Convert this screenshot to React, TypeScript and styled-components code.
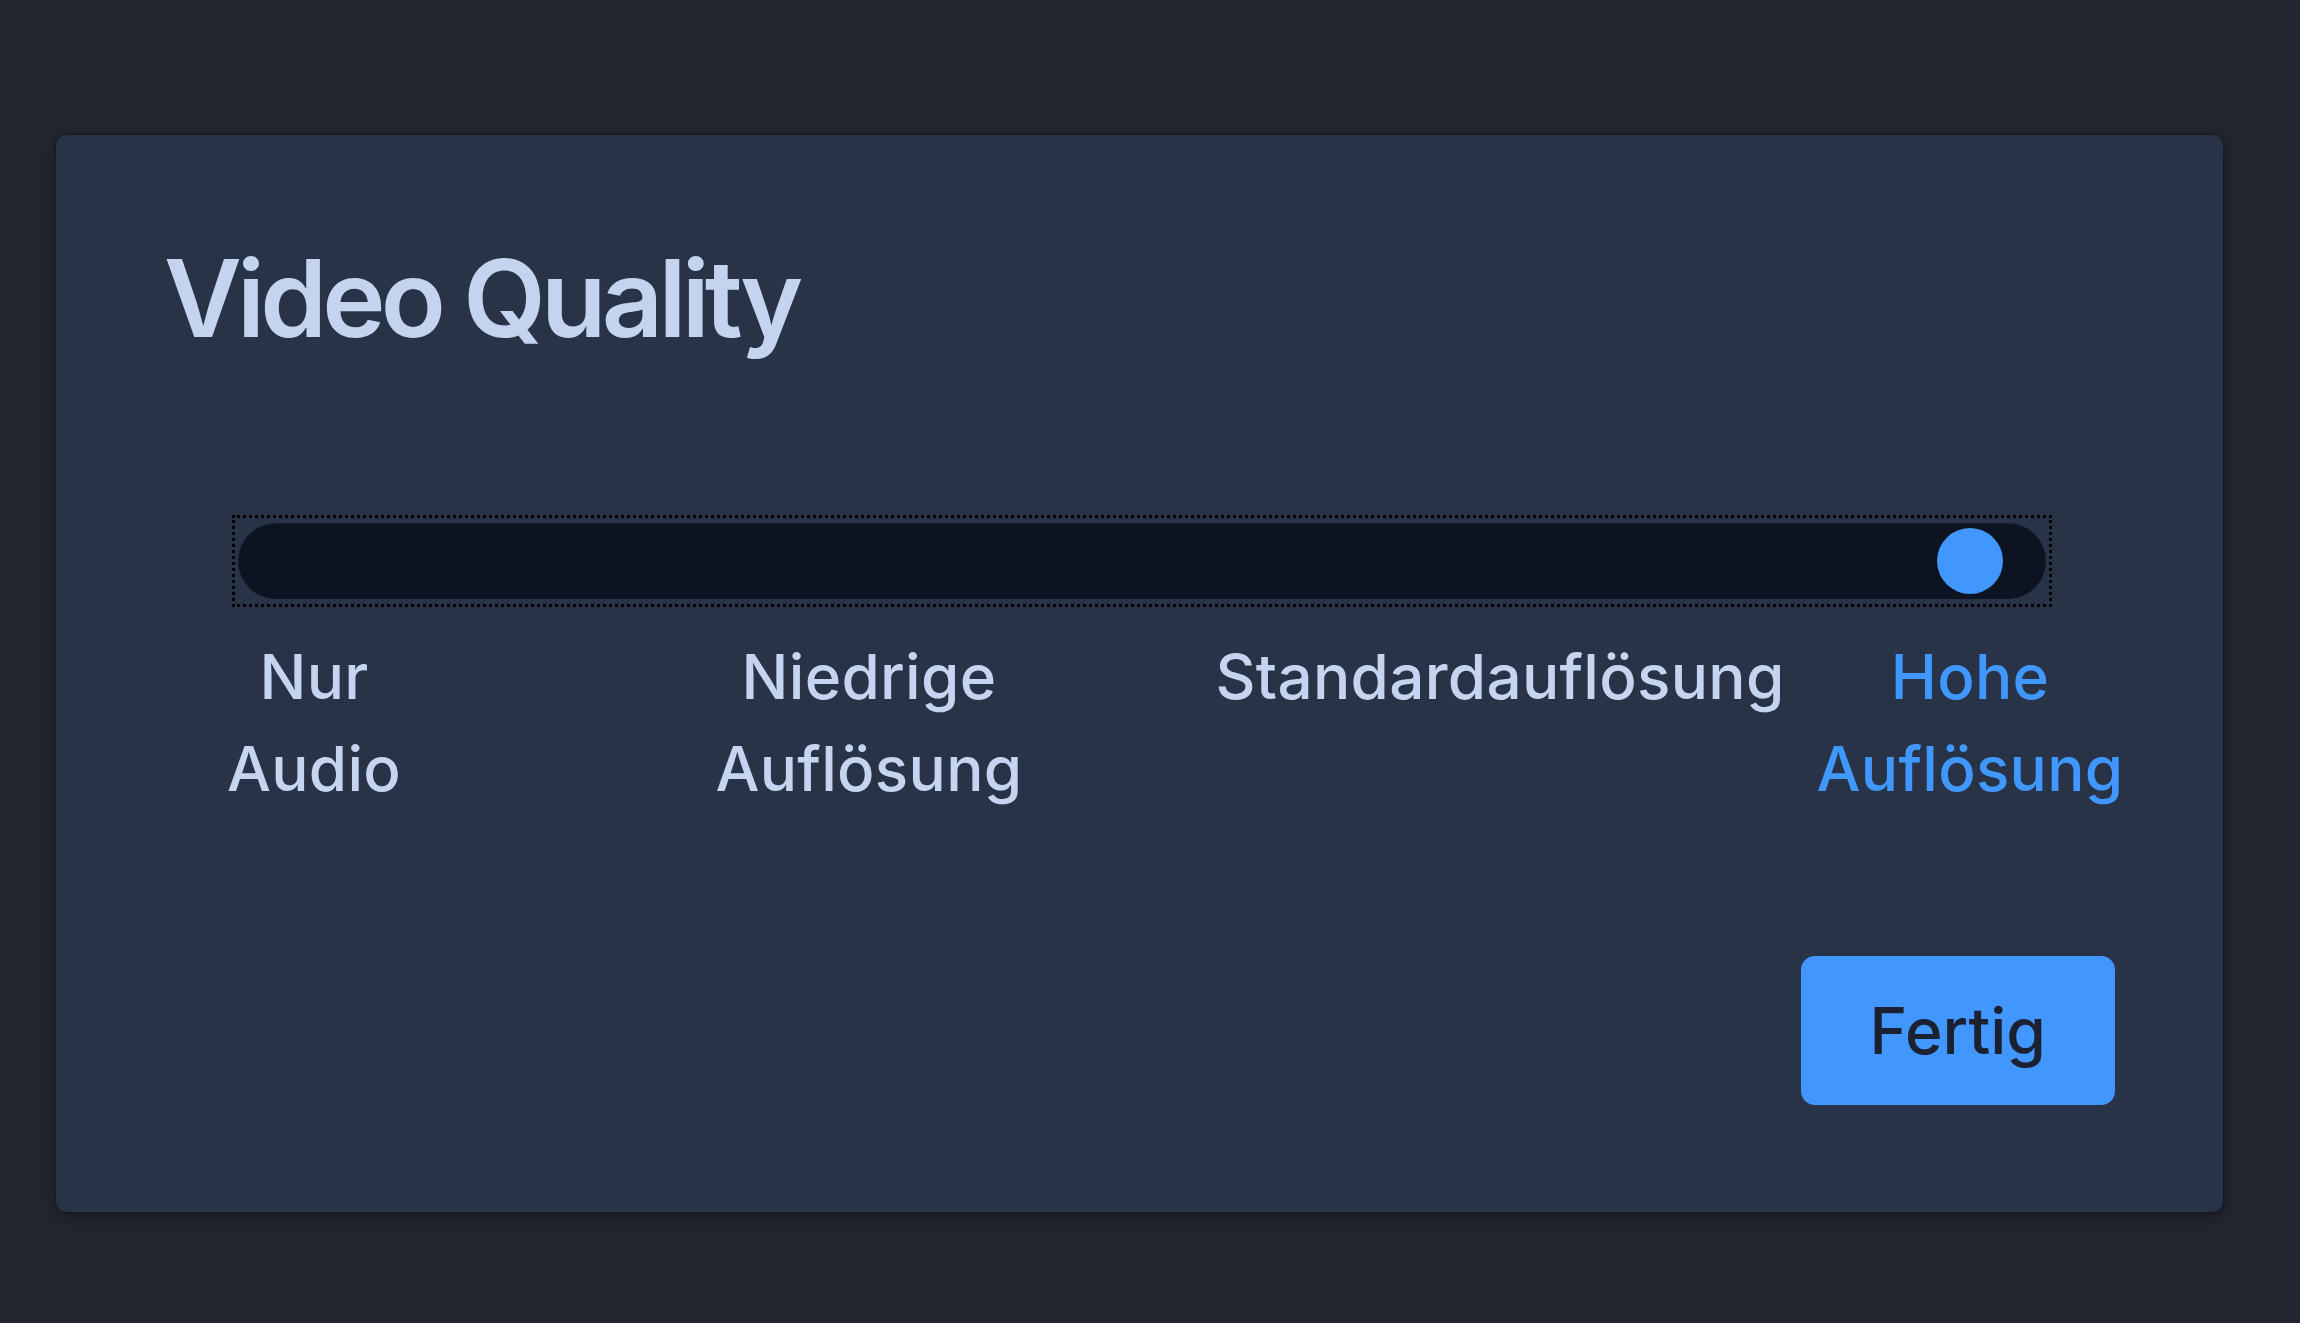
import React from "react";
import styled, { createGlobalStyle } from "styled-components";

const GlobalStyle = createGlobalStyle`
  html, body {
    margin: 0;
    padding: 0;
    background: #22262f;
  }
  body {
    font-family: Inter, "Noto Sans", "Liberation Sans", sans-serif;
  }
`;

const Page = styled.div`
  min-height: 100vh;
  box-sizing: border-box;
  padding: 135px 77px 0 56px;
  background: #22262f;
`;

const Card = styled.section`
  background: #283348;
  border-radius: 10px;
  box-shadow: 0 4px 18px rgba(0, 0, 0, 0.35), 0 0 3px rgba(0, 0, 0, 0.4);
  padding: 110px 108px 107px 108px;
  display: flex;
  flex-direction: column;
`;

const Title = styled.h1`
  margin: 0;
  font-size: 107px;
  line-height: 1;
  font-weight: 600;
  letter-spacing: -4.8px;
  color: #c4d4ef;
`;

const SliderFrame = styled.div`
  margin: 163px 63px 0 68px;
  border: 3px dotted #000000;
  padding: 5px 3px;
`;

const Track = styled.div`
  height: 76px;
  border-radius: 38px;
  background: #0d1321;
  box-shadow: inset 0 1px 2px rgba(40, 55, 80, 0.35);
  display: flex;
  align-items: center;
  justify-content: flex-end;
  padding-right: 43px;
`;

const Thumb = styled.div`
  width: 66px;
  height: 66px;
  border-radius: 50%;
  background: #4297ff;
`;

const LabelRow = styled.div`
  margin: 24px 0 0 15px;
  display: grid;
  grid-template-columns: 270px 600px 422px 278px;
  column-gap: 120px;
  justify-items: center;
`;

const Label = styled.span<{ $active?: boolean }>`
  width: min-content;
  text-align: center;
  font-size: 62px;
  line-height: 92px;
  font-weight: 500;
  letter-spacing: 0.3px;
  color: ${(p) => (p.$active ? "#4098ff" : "#c6d5ef")};
`;

const Footer = styled.div`
  margin-top: 141px;
  display: flex;
  justify-content: flex-end;
`;

const DoneButton = styled.button`
  height: 149px;
  padding: 0 69px;
  border: none;
  border-radius: 14px;
  background: #4297ff;
  color: #1b2131;
  font-family: Inter, "Noto Sans", "Liberation Sans", sans-serif;
  font-size: 64px;
  font-weight: 450;
  cursor: pointer;
`;

const levels = [
  { label: "Nur Audio" },
  { label: "Niedrige Auflösung" },
  { label: "Standardauflösung" },
  { label: "Hohe Auflösung" },
];

const selected = 3;

export default function App() {
  return (
    <>
      <GlobalStyle />
      <Page>
        <Card>
          <Title>Video Quality</Title>
          <SliderFrame>
            <Track>
              <Thumb />
            </Track>
          </SliderFrame>
          <LabelRow>
            {levels.map((l, i) => (
              <Label key={l.label} $active={i === selected}>
                {l.label}
              </Label>
            ))}
          </LabelRow>
          <Footer>
            <DoneButton>Fertig</DoneButton>
          </Footer>
        </Card>
      </Page>
    </>
  );
}
